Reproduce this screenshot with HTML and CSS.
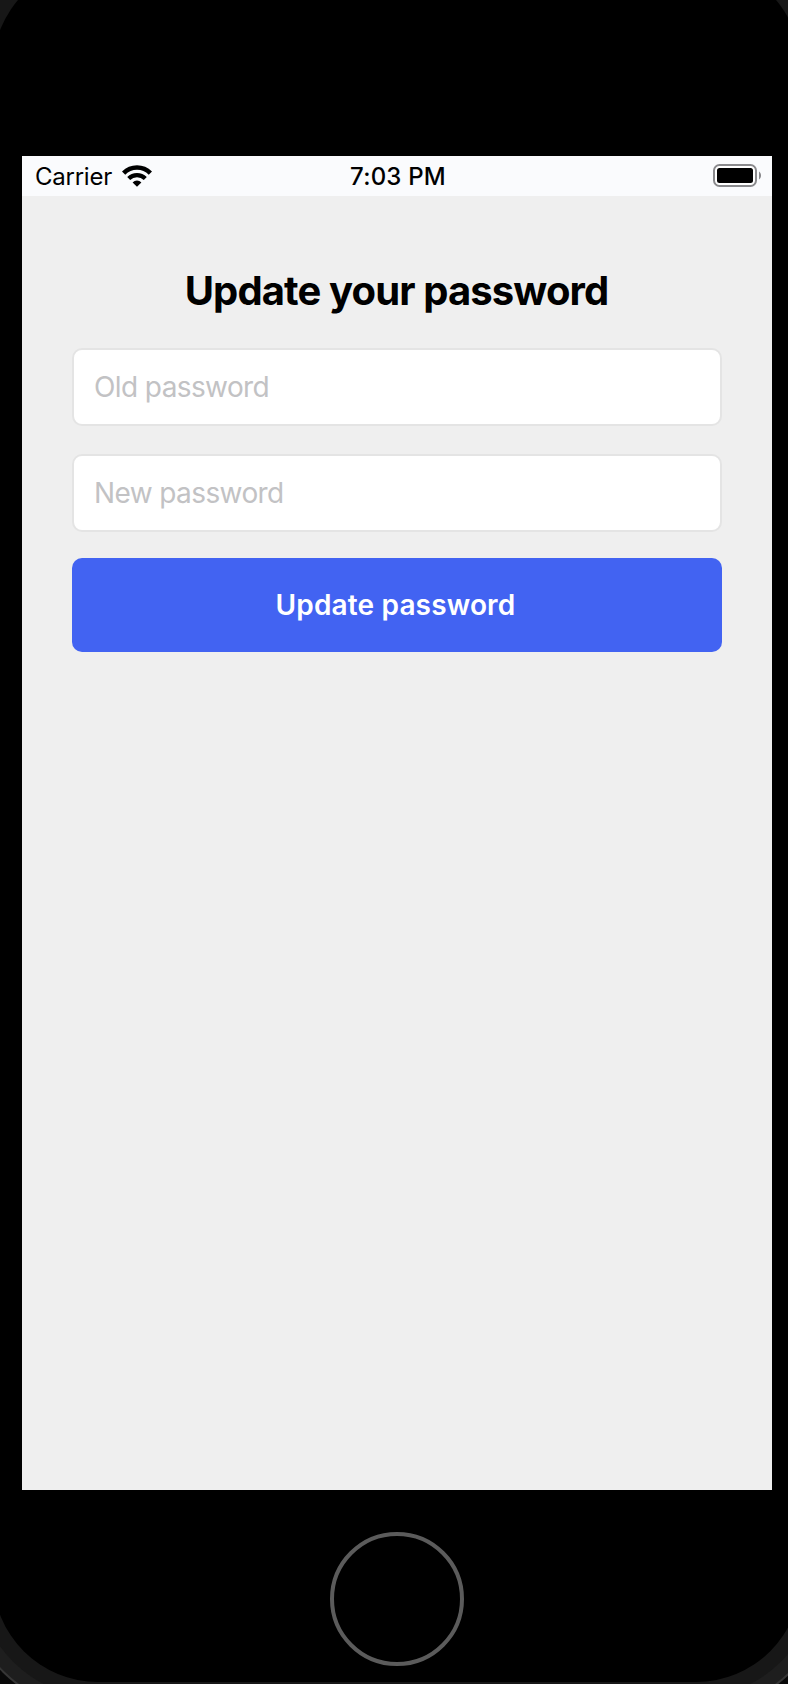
FILE: index.html
```
<!DOCTYPE html>
<html lang="en">
<head>
<meta charset="utf-8">
<title>Update your password</title>
<link rel="stylesheet" href="styles.css">
</head>
<body>
<div class="device">
  <main class="screen">
    <header class="status-bar">
      <div class="carrier">
        <span class="carrier-name">Carrier</span>
        <svg class="wifi" width="30" height="22" viewBox="0 0 30 22" aria-hidden="true">
          <path d="M1.6 8.1a19 19 0 0 1 26.8 0" fill="none" stroke="#000" stroke-width="4.6"/>
          <path d="M6.7 13.5a11.7 11.7 0 0 1 16.6 0" fill="none" stroke="#000" stroke-width="4.2"/>
          <path d="M10.6 17.4a6.2 6.2 0 0 1 8.8 0L15 21.8z"/>
        </svg>
      </div>
      <div class="time">7:03 PM</div>
      <svg class="battery" width="48" height="24" viewBox="0 0 48 24" aria-hidden="true">
        <rect x="1" y="1" width="42" height="21" rx="5.5" fill="#fff" stroke="#8a8a8d" stroke-width="2"/>
        <rect x="4" y="4" width="36" height="15" rx="2.5"/>
        <path d="M46 7.5c2.7 1.8 2.7 6.2 0 8z" fill="#8a8a8d"/>
      </svg>
    </header>
    <form class="form">
      <h1 class="title">Update your password</h1>
      <input class="field" type="password" placeholder="Old password">
      <input class="field" type="password" placeholder="New password">
      <button class="submit" type="button">Update password</button>
    </form>
  </main>
  <div class="home-button"></div>
</div>
</body>
</html>
```
FILE: styles.css
```
* { box-sizing: border-box; }
html { overflow: hidden; background: #080808; }
body {
  display: flow-root;
  width: 788px;
  height: 1684px;
  margin: 0;
  overflow: hidden;
  background: #080808;
  font-family: Inter, "Liberation Sans", sans-serif;
  color: #000;
}
.device {
  display: flex;
  flex-direction: column;
  width: 808px;
  height: 1719px;
  margin: -37px 0 0 -7px;
  padding: 193px 29px 0;
  border-radius: 105px;
  background: #000;
  box-shadow: 0 0 0 15px #171717, 0 0 0 28px #1e1e1e, 0 0 0 30px #363636;
}
.screen {
  height: 1334px;
  background: #efefef;
}
.status-bar {
  display: grid;
  grid-template-columns: 1fr auto 1fr;
  align-items: center;
  height: 40px;
  padding: 0 11px 0 13px;
  background: #fafbfd;
}
.carrier {
  display: flex;
  align-items: center;
  gap: 10px;
  font-size: 24px;
  line-height: 38px;
}
.carrier-name {
  padding-top: 2px;
  letter-spacing: -0.25px;
}
.time {
  padding-top: 2px;
  font-size: 24px;
  font-weight: 500;
  line-height: 38px;
  letter-spacing: 0.2px;
}
.battery { justify-self: end; }
.form {
  display: flex;
  flex-direction: column;
  padding: 68px 50px 0;
}
.title {
  margin: 0 0 30px;
  padding-right: 1px;
  font-size: 40px;
  font-weight: 700;
  line-height: 54px;
  text-align: center;
  letter-spacing: -0.88px;
}
.field {
  height: 78px;
  margin: 0 0 28px;
  padding: 0 20px;
  border: 2px solid #e4e4e4;
  border-radius: 10px;
  background: #fff;
  font: 400 28px Inter, sans-serif;
  letter-spacing: -0.6px;
}
.field::placeholder { color: #c2c2c4; opacity: 1; }
.submit {
  height: 94px;
  margin-top: -2px;
  padding: 0 3px 0 0;
  border: 0;
  border-radius: 10px;
  background: #4263f2;
  color: #fff;
  font: 600 28px Inter, sans-serif;
  letter-spacing: 0.15px;
}
.home-button {
  width: 134px;
  height: 134px;
  margin: 42px 0 0 308px;
  border: 4px solid #5b5b5b;
  border-radius: 50%;
}
```
